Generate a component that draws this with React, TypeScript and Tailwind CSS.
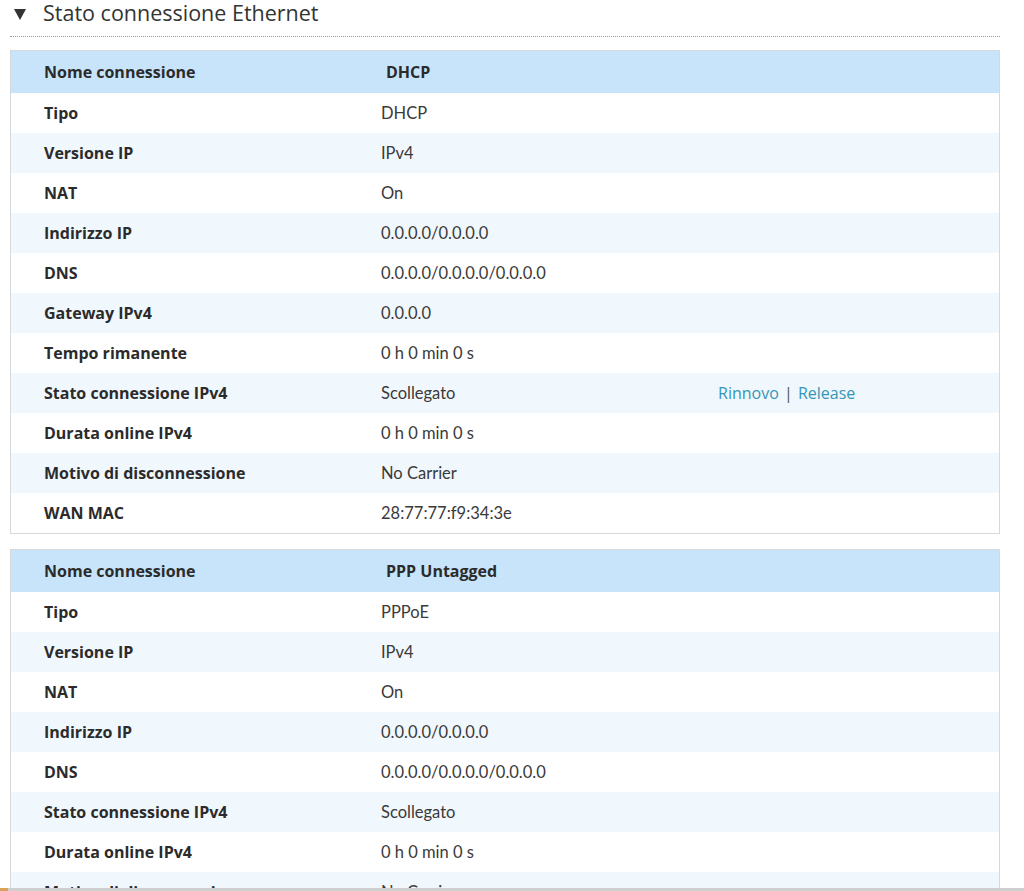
import React from 'react'

type Row = { label: string; value: string; links?: boolean }

const dhcp: Row[] = [
  { label: 'Tipo', value: 'DHCP' },
  { label: 'Versione IP', value: 'IPv4' },
  { label: 'NAT', value: 'On' },
  { label: 'Indirizzo IP', value: '0.0.0.0/0.0.0.0' },
  { label: 'DNS', value: '0.0.0.0/0.0.0.0/0.0.0.0' },
  { label: 'Gateway IPv4', value: '0.0.0.0' },
  { label: 'Tempo rimanente', value: '0 h 0 min 0 s' },
  { label: 'Stato connessione IPv4', value: 'Scollegato', links: true },
  { label: 'Durata online IPv4', value: '0 h 0 min 0 s' },
  { label: 'Motivo di disconnessione', value: 'No Carrier' },
  { label: 'WAN MAC', value: '28:77:77:f9:34:3e' },
]

const ppp: Row[] = [
  { label: 'Tipo', value: 'PPPoE' },
  { label: 'Versione IP', value: 'IPv4' },
  { label: 'NAT', value: 'On' },
  { label: 'Indirizzo IP', value: '0.0.0.0/0.0.0.0' },
  { label: 'DNS', value: '0.0.0.0/0.0.0.0/0.0.0.0' },
  { label: 'Stato connessione IPv4', value: 'Scollegato' },
  { label: 'Durata online IPv4', value: '0 h 0 min 0 s' },
  { label: 'Motivo di disconnessione', value: 'No Carrier' },
  { label: 'WAN MAC', value: '28:77:77:f9:34:3e' },
]

function ConnTable({ name, rows }: { name: string; rows: Row[] }) {
  return (
    <div className="border border-[#d6d9dc] bg-white">
      <div className="grid grid-cols-[370px_337px_1fr] h-[42px] items-center bg-[#c8e4fa] font-bold text-[#2b2b2b]">
        <div className="pl-[33px]">Nome connessione</div>
        <div className="pl-[5px]">{name}</div>
        <div></div>
      </div>
      {rows.map((r, i) => (
        <div
          key={r.label}
          className={'grid grid-cols-[370px_337px_1fr] h-[40px] items-center ' + (i % 2 == 1 ? 'bg-[#f0f7fd]' : 'bg-white')}
        >
          <div className="pl-[33px] font-bold text-[#2b2b2b]">{r.label}</div>
          <div className="text-[#3a3a3a] font-['Lato',sans-serif] text-[16.5px]">{r.value}</div>
          <div>
            {r.links && (
              <span className="text-[#3596b5]">
                Rinnovo <span className="text-[#555] px-[1px]">|</span> Release
              </span>
            )}
          </div>
        </div>
      ))}
    </div>
  )
}

export default function App() {
  return (
    <div className="bg-white min-h-screen pl-[10px] pr-[24px] text-[16px] font-['Open_Sans','Noto_Sans',sans-serif]">
      <div className="flex items-center h-[37px] pb-[11px] border-b border-dotted border-[#9a9a9a]">
        <svg width="12" height="11" viewBox="0 0 12 11" className="ml-[4px] mt-[3px]">
          <polygon points="0,0 12,0 6,11" fill="#333" />
        </svg>
        <span className="ml-[17px] text-[21.5px] leading-[26px] text-[#333]">Stato connessione Ethernet</span>
      </div>
      <div className="mt-[13px]">
        <ConnTable name="DHCP" rows={dhcp} />
      </div>
      <div className="mt-[15px]">
        <ConnTable name="PPP Untagged" rows={ppp} />
      </div>
      <div className="fixed left-0 right-0 bottom-0 h-[3px] bg-[#cfcfcf]">
        <div className="w-[8px] h-full bg-[#d9a15a]"></div>
      </div>
    </div>
  )
}
